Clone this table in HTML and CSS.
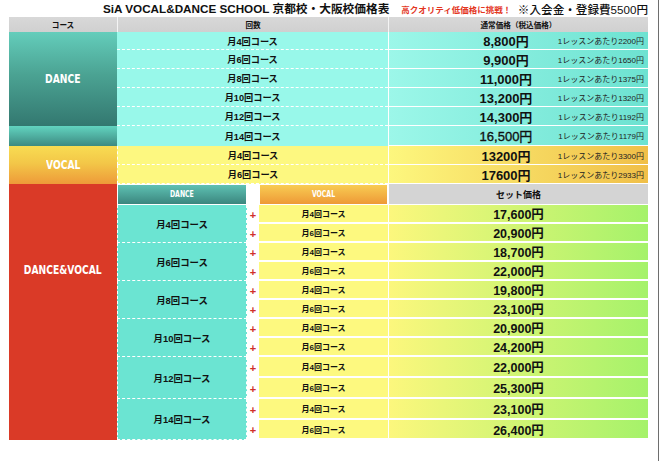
FILE: index.html
```html
<!DOCTYPE html>
<html lang="ja">
<head>
<meta charset="utf-8">
<title>SiA 価格表</title>
<link rel="stylesheet" href="styles.css">
</head>
<body>
<div class="page">
  <div class="title">
    <h1 class="title-main">SiA VOCAL&amp;DANCE SCHOOL 京都校・大阪校価格表</h1>
    <span class="title-red">高クオリティ低価格に挑戦！</span>
    <span class="title-fee">※入会金・登録費5500円</span>
  </div>

  <div class="top">
    <div class="hd">コース</div>
    <div class="hd hd-sep">回数</div>
    <div class="hd hd-sep">通常価格（税込価格）</div>

    <div class="lbl lbl-dance"><span class="lbl-text">DANCE</span></div>
    <div class="lbl lbl-dance14"></div>
    <div class="lbl lbl-vocal"><span class="lbl-text">VOCAL</span></div>

    <div class="course d">月4回コース</div>
    <div class="price d"><span class="amt">8,800円</span><span class="per">1レッスンあたり2200円</span></div>
    <div class="course d">月6回コース</div>
    <div class="price d"><span class="amt">9,900円</span><span class="per">1レッスンあたり1650円</span></div>
    <div class="course d">月8回コース</div>
    <div class="price d"><span class="amt">11,000円</span><span class="per">1レッスンあたり1375円</span></div>
    <div class="course d">月10回コース</div>
    <div class="price d"><span class="amt">13,200円</span><span class="per">1レッスンあたり1320円</span></div>
    <div class="course d">月12回コース</div>
    <div class="price d"><span class="amt">14,300円</span><span class="per">1レッスンあたり1192円</span></div>
    <div class="course d last">月14回コース</div>
    <div class="price d"><span class="amt amt-light">16,500円</span><span class="per">1レッスンあたり1179円</span></div>
    <div class="course v">月4回コース</div>
    <div class="price v"><span class="amt">13200円</span><span class="per">1レッスンあたり3300円</span></div>
    <div class="course v">月6回コース</div>
    <div class="price v"><span class="amt">17600円</span><span class="per">1レッスンあたり2933円</span></div>
  </div>

  <div class="dv">
    <div class="lbl lbl-dv"><span class="lbl-text">DANCE&amp;VOCAL</span></div>
    <div class="sub sub-dance"><span class="sub-text">DANCE</span></div>
    <div class="sub-gap"></div>
    <div class="sub sub-vocal"><span class="sub-text">VOCAL</span></div>
    <div class="sub-set">セット価格</div>

    <div class="dc">月4回コース</div>
    <div class="plus">+</div><div class="vc">月4回コース</div><div class="set">17,600円</div>
    <div class="plus">+</div><div class="vc">月6回コース</div><div class="set">20,900円</div>

    <div class="dc">月6回コース</div>
    <div class="plus">+</div><div class="vc">月4回コース</div><div class="set">18,700円</div>
    <div class="plus">+</div><div class="vc">月6回コース</div><div class="set">22,000円</div>

    <div class="dc">月8回コース</div>
    <div class="plus">+</div><div class="vc">月4回コース</div><div class="set">19,800円</div>
    <div class="plus">+</div><div class="vc">月6回コース</div><div class="set">23,100円</div>

    <div class="dc">月10回コース</div>
    <div class="plus">+</div><div class="vc">月4回コース</div><div class="set">20,900円</div>
    <div class="plus">+</div><div class="vc">月6回コース</div><div class="set">24,200円</div>

    <div class="dc">月12回コース</div>
    <div class="plus">+</div><div class="vc">月4回コース</div><div class="set">22,000円</div>
    <div class="plus">+</div><div class="vc">月6回コース</div><div class="set">25,300円</div>

    <div class="dc">月14回コース</div>
    <div class="plus">+</div><div class="vc">月4回コース</div><div class="set">23,100円</div>
    <div class="plus">+</div><div class="vc">月6回コース</div><div class="set">26,400円</div>
  </div>
</div>
</body>
</html>
```

FILE: styles.css
```css
* {
  box-sizing: border-box;
  margin: 0;
  padding: 0;
}

html,
body {
  background: #fff;
}

body {
  font-family: "Liberation Sans", "Noto Sans CJK JP", sans-serif;
  color: #111;
}

.page {
  width: 659px;
  height: 461px;
  border-right: 1px solid #6e6e6e;
  padding-left: 9px;
}

/* Title line */
.title {
  display: flex;
  align-items: center;
  width: 639px;
  height: 17px;
  white-space: nowrap;
}

.title-main {
  margin-left: 94px;
  font-size: 11.7px;
  font-weight: bold;
  line-height: 17px;
}

.title-red {
  margin-left: 12px;
  font-size: 8.5px;
  font-weight: bold;
  color: #e3371f;
}

.title-fee {
  margin-left: auto;
  font-size: 11.6px;
  font-weight: 500;
  color: #111;
}

/* Top table */
.top {
  display: grid;
  grid-template-columns: 108px 271px 260px;
  grid-template-rows: 15px 18px 19px 19px 19px 19px 20px 19px 19px;
}

.hd {
  display: flex;
  align-items: center;
  justify-content: center;
  background: linear-gradient(#d8d8d8, #d0d0d0);
  font-size: 7.6px;
  font-weight: bold;
}

.hd-sep {
  border-left: 1px solid #f4f4f4;
}

.lbl {
  display: flex;
  align-items: center;
  justify-content: center;
  color: #fff;
  font-family: "DejaVu Sans Condensed", "DejaVu Sans", sans-serif;
  font-weight: bold;
  font-size: 12px;
  grid-column: 1;
}

.lbl-text {
  display: inline-block;
  transform: scaleX(0.85);
}

.lbl-dance {
  grid-row: 2 / 7;
  background: linear-gradient(#64cdbb, #4ba393 45%, #337870);
}

.lbl-dance14 {
  grid-row: 7;
  background: linear-gradient(#62d4c0, #3d8a81);
}

.lbl-vocal {
  grid-row: 8 / 10;
  background: linear-gradient(#f8dc52, #f3c748 45%, #ee9a39);
}

.course {
  display: flex;
  align-items: center;
  justify-content: center;
  font-size: 9.2px;
  font-weight: bold;
  border-bottom: 1px dashed #fff;
}

.course.d {
  background: #98f8ea;
}

.course.d.last {
  border-bottom: none;
}

.course.v {
  background: #fdf880;
  border-left: 1px dashed #fff;
}

.price {
  display: flex;
  align-items: center;
  border-left: 1px solid #fff;
  border-bottom: 1px solid #fff;
  white-space: nowrap;
}

.price.d {
  background: linear-gradient(90deg, #9cf7e9, #6de2d1);
}

.price.v {
  background: linear-gradient(90deg, #fdf77e, #f0bf48);
}

.amt {
  flex: none;
  width: 90px;
  margin-left: 72px;
  text-align: center;
  font-size: 13px;
  font-weight: bold;
}

.amt-light {
  font-weight: normal;
  -webkit-text-stroke: 0.35px #111;
}

.per {
  flex: none;
  margin-left: auto;
  margin-right: 4px;
  font-size: 8px;
  color: #222;
}

/* DANCE & VOCAL set table */
.dv {
  display: grid;
  grid-template-columns: 108px 130px 12px 129px 260px;
  grid-template-rows: 21px repeat(8, 19px) 21px 21px 21px 20px;
}

.lbl-dv {
  grid-row: 1 / 14;
  background: #da3a27;
  align-items: flex-start;
  padding-top: 79px;
}

.sub {
  display: flex;
  align-items: center;
  justify-content: center;
  color: #fff;
  font-family: "DejaVu Sans Condensed", "DejaVu Sans", sans-serif;
  font-weight: bold;
  font-size: 8px;
  border: 1px solid #fff;
}

.sub-text {
  display: inline-block;
  transform: scaleX(0.86);
}

.sub-dance {
  background: linear-gradient(#5ec1b3, #3b867e);
}

.sub-vocal {
  background: linear-gradient(#f8cc52, #ee9937);
}

.sub-gap {
  background: #fff;
}

.sub-set {
  display: flex;
  align-items: center;
  justify-content: center;
  background: #d4d4d4;
  border-left: 1px solid #fff;
  border-bottom: 1px solid #fff;
  font-size: 9px;
  font-weight: bold;
}

.dc {
  grid-row: span 2;
  display: flex;
  align-items: center;
  justify-content: center;
  background: #6be4d2;
  border: 1px dashed #fff;
  border-top: none;
  font-size: 9.4px;
  font-weight: bold;
}

.plus {
  display: flex;
  align-items: center;
  justify-content: center;
  background: #fff;
  color: #cf2f2a;
  font-weight: bold;
  font-size: 11px;
}

.vc {
  display: flex;
  align-items: center;
  justify-content: center;
  background: #fdf97f;
  border-bottom: 2px solid #fff;
  font-size: 8px;
  font-weight: bold;
}

.set {
  display: flex;
  align-items: center;
  justify-content: center;
  background: linear-gradient(90deg, #fcf77d, #a5f26a);
  border-left: 1px solid #fff;
  border-bottom: 2px solid #fff;
  font-size: 12.5px;
  font-weight: bold;
}
```
